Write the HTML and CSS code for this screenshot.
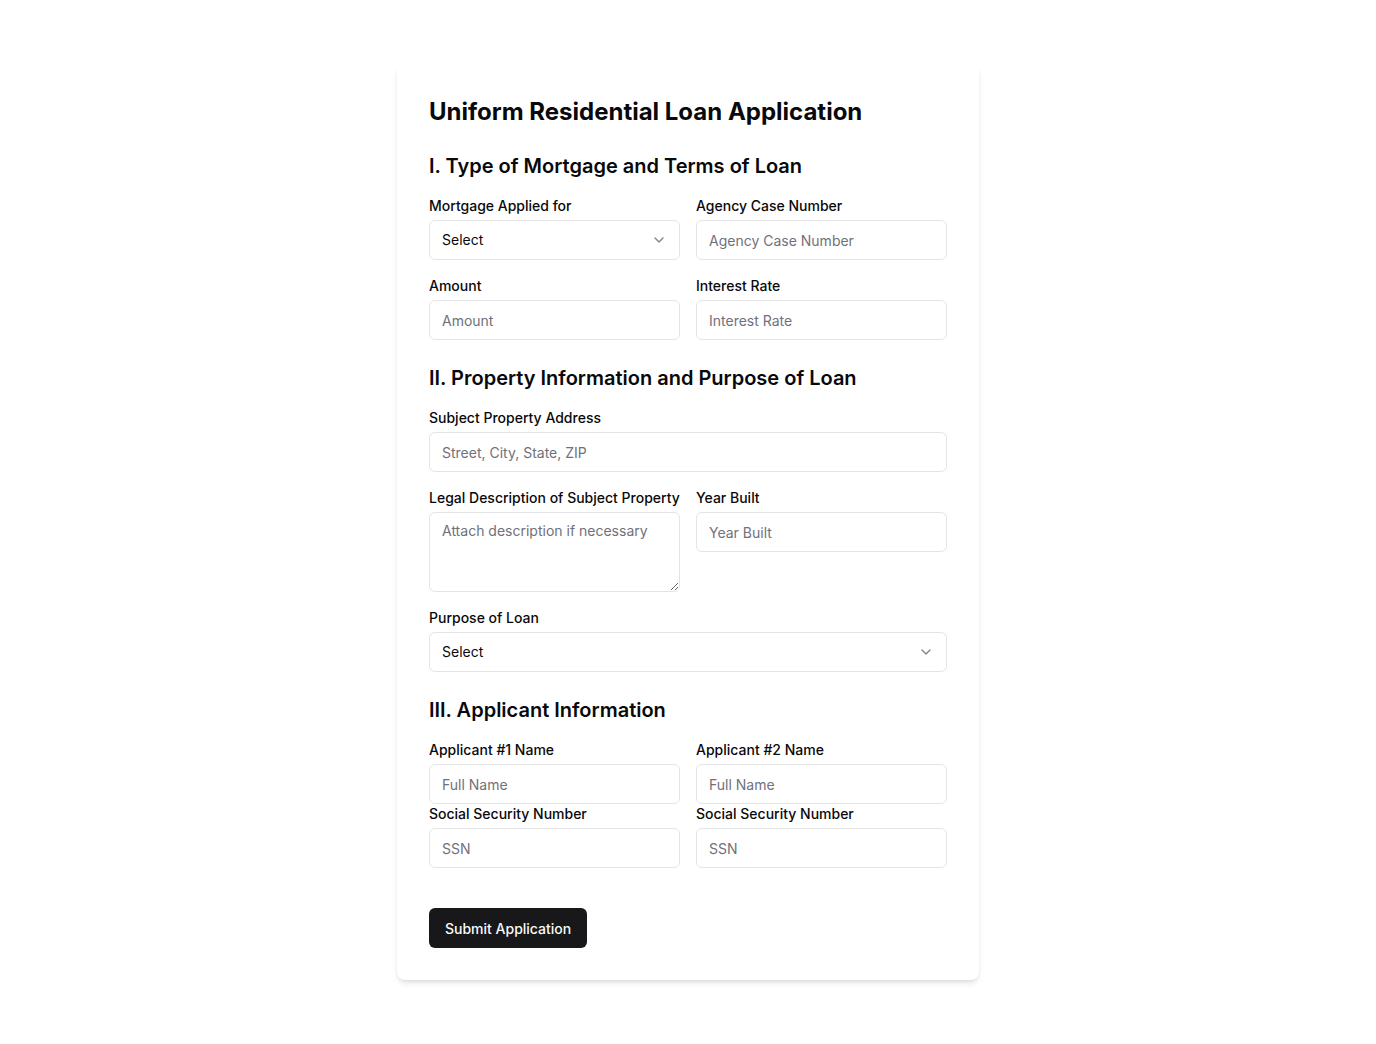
FILE: index.html
```html
<!DOCTYPE html>
<html lang="en">
<head>
<meta charset="utf-8">
<title>Uniform Residential Loan Application</title>
<link rel="stylesheet" href="styles.css">
</head>
<body>
<main class="page">
  <form class="card">
    <h1 class="title">Uniform Residential Loan Application</h1>

    <section class="section">
      <h2 class="section-title">I. Type of Mortgage and Terms of Loan</h2>
      <div class="grid">
        <div class="field">
          <label class="label">Mortgage Applied for</label>
          <div class="select">
            <span>Select</span>
            <svg class="chev" viewBox="0 0 24 24" width="16" height="16" fill="none" stroke="currentColor" stroke-width="2" stroke-linecap="round" stroke-linejoin="round"><path d="m6 9 6 6 6-6"/></svg>
          </div>
        </div>
        <div class="field">
          <label class="label">Agency Case Number</label>
          <input class="input" placeholder="Agency Case Number">
        </div>
        <div class="field">
          <label class="label">Amount</label>
          <input class="input" placeholder="Amount">
        </div>
        <div class="field">
          <label class="label">Interest Rate</label>
          <input class="input" placeholder="Interest Rate">
        </div>
      </div>
    </section>

    <section class="section">
      <h2 class="section-title">II. Property Information and Purpose of Loan</h2>
      <div class="grid">
        <div class="field span2">
          <label class="label">Subject Property Address</label>
          <input class="input" placeholder="Street, City, State, ZIP">
        </div>
        <div class="field">
          <label class="label">Legal Description of Subject Property</label>
          <textarea class="textarea" placeholder="Attach description if necessary"></textarea>
        </div>
        <div class="field">
          <label class="label">Year Built</label>
          <input class="input" placeholder="Year Built">
        </div>
        <div class="field span2">
          <label class="label">Purpose of Loan</label>
          <div class="select">
            <span>Select</span>
            <svg class="chev" viewBox="0 0 24 24" width="16" height="16" fill="none" stroke="currentColor" stroke-width="2" stroke-linecap="round" stroke-linejoin="round"><path d="m6 9 6 6 6-6"/></svg>
          </div>
        </div>
      </div>
    </section>

    <section class="section">
      <h2 class="section-title">III. Applicant Information</h2>
      <div class="grid tight">
        <div class="field">
          <label class="label">Applicant #1 Name</label>
          <input class="input" placeholder="Full Name">
          <label class="label">Social Security Number</label>
          <input class="input" placeholder="SSN">
        </div>
        <div class="field">
          <label class="label">Applicant #2 Name</label>
          <input class="input" placeholder="Full Name">
          <label class="label">Social Security Number</label>
          <input class="input" placeholder="SSN">
        </div>
      </div>
    </section>

    <button type="button" class="button">Submit Application</button>
  </form>
</main>
</body>
</html>
```

FILE: styles.css
```css
* { box-sizing: border-box; }
html, body { margin: 0; padding: 0; background: #fff; }
body {
  font-family: Inter, "Noto Sans", sans-serif;
  color: #09090b;
  -webkit-font-smoothing: antialiased;
}
.page {
  display: flex;
  justify-content: center;
  padding-top: 64px;
  padding-bottom: 64px;
}
.card {
  width: 582px;
  background: #fff;
  border-radius: 8px;
  padding: 32px;
  box-shadow: 0 4px 6px -1px rgba(0,0,0,0.1), 0 2px 4px -2px rgba(0,0,0,0.1);
}
.title {
  margin: 0 0 24px;
  font-size: 24px;
  line-height: 32px;
  font-weight: 700;
}
.section { margin-bottom: 24px; }
.section-title {
  margin: 0 0 16px;
  font-size: 20px;
  line-height: 28px;
  font-weight: 600;
}
.grid {
  display: grid;
  grid-template-columns: 1fr 1fr;
  column-gap: 16px;
  row-gap: 16px;
}
.span2 { grid-column: span 2; }
.field { display: flex; flex-direction: column; }
.label {
  font-size: 14px;
  line-height: 20px;
  font-weight: 500;
  margin-bottom: 4px;
}
.input, .select, .textarea {
  width: 100%;
  height: 40px;
  border: 1px solid #e4e4e7;
  border-radius: 6px;
  background: #fff;
  font-family: inherit;
  font-size: 14px;
  line-height: 20px;
  color: #09090b;
  padding: 0 12px;
  outline: none;
}
.input::placeholder, .textarea::placeholder { color: #71717a; }
.textarea {
  height: 80px;
  padding: 8px 12px;
  resize: vertical;
}
.select {
  display: flex;
  align-items: center;
  justify-content: space-between;
}
.chev { color: #09090b; opacity: 0.5; }
.button {
  height: 40px;
  padding: 0 16px;
  margin-top: 16px;
  background: #18181b;
  color: #fafafa;
  border: none;
  border-radius: 6px;
  font-family: inherit;
  font-size: 14px;
  font-weight: 500;
  cursor: pointer;
}
```
